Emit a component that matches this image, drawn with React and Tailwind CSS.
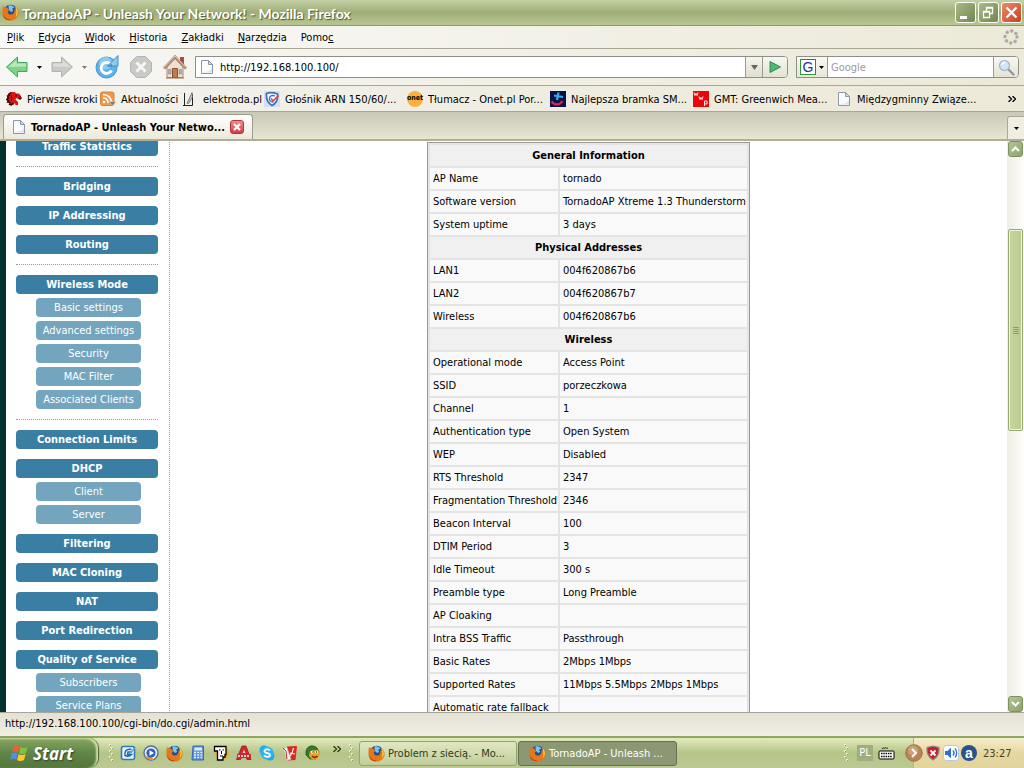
import React from "react";

const menuItems = [
  ["", "P", "lik"],
  ["", "E", "dycja"],
  ["", "W", "idok"],
  ["", "H", "istoria"],
  ["", "Z", "akładki"],
  ["", "N", "arzędzia"],
  ["Pomo", "c", ""],
];

const sideItems = [
  { label: "Traffic Statistics" },
  { divider: true },
  { label: "Bridging" },
  { label: "IP Addressing" },
  { label: "Routing" },
  { divider: true },
  { label: "Wireless Mode" },
  { label: "Basic settings", sub: true },
  { label: "Advanced settings", sub: true },
  { label: "Security", sub: true },
  { label: "MAC Filter", sub: true },
  { label: "Associated Clients", sub: true },
  { divider: true },
  { label: "Connection Limits" },
  { label: "DHCP" },
  { label: "Client", sub: true },
  { label: "Server", sub: true },
  { label: "Filtering" },
  { label: "MAC Cloning" },
  { label: "NAT" },
  { label: "Port Redirection" },
  { label: "Quality of Service" },
  { label: "Subscribers", sub: true },
  { label: "Service Plans", sub: true },
];

const sections = [
  {
    title: "General Information",
    rows: [
      ["AP Name", "tornado"],
      ["Software version", "TornadoAP Xtreme 1.3 Thunderstorm"],
      ["System uptime", "3 days"],
    ],
  },
  {
    title: "Physical Addresses",
    rows: [
      ["LAN1", "004f620867b6"],
      ["LAN2", "004f620867b7"],
      ["Wireless", "004f620867b6"],
    ],
  },
  {
    title: "Wireless",
    rows: [
      ["Operational mode", "Access Point"],
      ["SSID", "porzeczkowa"],
      ["Channel", "1"],
      ["Authentication type", "Open System"],
      ["WEP", "Disabled"],
      ["RTS Threshold", "2347"],
      ["Fragmentation Threshold", "2346"],
      ["Beacon Interval", "100"],
      ["DTIM Period", "3"],
      ["Idle Timeout", "300 s"],
      ["Preamble type", "Long Preamble"],
      ["AP Cloaking", ""],
      ["Intra BSS Traffic", "Passthrough"],
      ["Basic Rates", "2Mbps 1Mbps"],
      ["Supported Rates", "11Mbps 5.5Mbps 2Mbps 1Mbps"],
      ["Automatic rate fallback", ""],
    ],
  },
];

const Firefox = () => (
  <svg width="17" height="17" viewBox="0 0 16 16" className="shrink-0">
    <circle cx="8" cy="7.6" r="6.8" fill="#23508f" />
    <path d="M6 1.500c2-1 5 0 5.500 2l-2 1 1 2-2 1-2-2z" fill="#7cc4ea" />
    <path
      d="M.8 2.500C2 2.200 2.600 3 3.400 3.200 4.800 2.600 5.400 3.400 5.600 4.600L7 5.600 5.400 7.200C5.600 9.600 7.800 10.400 9.600 9.800 11.600 9 12 7 11.600 5 13 6.600 13.400 4 12.400 2.600 15 4.500 16 7 15.600 9.400 15 13.200 12 15.600 8 15.600 3.600 15.600.4 12 .4 8 .4 6 .6 4 .8 2.500z"
      fill="#e87817"
    />
    <path d="M12.400 2.600C15.600 5.600 15.600 10 12.800 12.600 14 9 13.800 6 12.400 2.600z" fill="#fbd24a" />
    <path d="M.8 9c.8 3.500 4 6 8 5.800-3.400 1.400-8-.8-8-5.800z" fill="#b8380c" />
  </svg>
);

const PageIcon = () => (
  <svg width="16" height="16" viewBox="0 0 16 16" className="shrink-0">
    <path d="M2.500 1.500h7l4 4v9h-11z" fill="#fbfcfe" stroke="#8c98a8" />
    <path d="M9.500 1.500v4h4z" fill="#d3dbe6" stroke="#8c98a8" strokeLinejoin="round" />
    <path d="M3.500 13.500H13V9c-2 3-5 4-9.500 4z" fill="#dde4ee" />
  </svg>
);

const Dinosaur = () => (
  <svg width="16" height="16" viewBox="0 0 16 16" className="shrink-0">
    <path
      d="M1 6l1-3 3-2h3.500l2 1.500H13l1.500 2 1 3-1.500 1.500L10.500 7l-1 1.500L12 11v3H9.500l-.5-2-1.500 2-3-1L1 10z"
      fill="#dc1717"
    />
    <path d="M5 1.500L3 3l.5 1.500L1.500 5l1 2-2 1.500 2 1-1 1.500 2.500.5-.5 2 2 .500L7 12" fill="none" stroke="#3a0505" strokeWidth="1.300" />
    <path d="M5 4l1 3-1 3M13 4.500l2 1.500v2l-3-1" fill="none" stroke="#5a0a0a" />
    <circle cx="10" cy="4.500" r=".9" fill="#200" />
  </svg>
);

const Feed = () => (
  <svg width="16" height="16" viewBox="0 0 16 16" className="shrink-0">
    <rect x=".5" y="1" width="13.500" height="13.500" rx="2" fill="#ef9648" stroke="#d98238" />
    <path d="M3 3.500c5 0 8.500 3.500 8.500 8.500M3 7c3 0 5 2 5 5" fill="none" stroke="#fff" strokeWidth="1.700" />
    <circle cx="4" cy="11" r="1.300" fill="#fff" />
    <path d="M9 10.500h7l-3.500 4z" fill="#7c7c7c" stroke="#ddd" strokeWidth=".5" />
  </svg>
);

const Elektroda = () => (
  <svg width="16" height="16" viewBox="0 0 16 16" className="shrink-0">
    <path d="M2.500 2v12M1 14.500h9.500M10.500 3v11.500" stroke="#222" fill="none" />
    <path d="M10 1.500L5 12.500l2-.5 3.500-6z" fill="#c9cccf" stroke="#666" strokeWidth=".8" />
  </svg>
);

const Shield = () => (
  <svg width="16" height="16" viewBox="0 0 16 16" className="shrink-0">
    <path d="M0 0h16v16H0z" fill="#d5e1f3" />
    <path d="M2.500 2.500c4-1.500 7-1 11 .5.500 5-1 9.500-5.500 11.500C3.500 12 2 8 2.500 2.500z" fill="#f5f9ff" stroke="#3d70c2" strokeWidth="1.800" />
    <path d="M7 7.500l2 2.500 5.500-5.500" fill="none" stroke="#db4b2d" strokeWidth="1.600" />
    <path d="M11 5c-2-1-5-.5-5.500 2S7 11.500 9.500 11" fill="none" stroke="#3d70c2" strokeWidth="1.300" />
  </svg>
);

const Onet = () => (
  <span className="flex size-4 shrink-0 items-center justify-center rounded-full bg-[#fbb040] text-[7px] font-bold leading-none">
    onet
  </span>
);

const Plus = () => (
  <svg width="16" height="16" viewBox="0 0 16 16" className="shrink-0">
    <path d="M0 0h16v16H0z" fill="#0c1048" />
    <path d="M8.500 1.500L7 9M4 4.500l9 1.500" stroke="#35b0e6" strokeWidth="2.200" />
    <path d="M1.500 10.500c3 4 8 4 11-.5" fill="none" stroke="#e2214e" strokeWidth="2.200" />
  </svg>
);

const Wwp = () => (
  <svg width="16" height="16" viewBox="0 0 16 16" className="shrink-0">
    <path d="M0 0h16v16H0z" fill="#e8080c" />
    <path d="M1 1.500l1 3 1-2 1 2 1-3M6 5.500l1 3 1-2 1 2 1-3M11.500 15v-5h2.500v3h-2.500" fill="none" stroke="#fff" strokeWidth=".9" />
  </svg>
);

const bookmarks = [
  { label: "Pierwsze kroki", icon: <Dinosaur />, width: "w-[94px]" },
  { label: "Aktualności", icon: <Feed />, width: "w-[82px]" },
  { label: "elektroda.pl", icon: <Elektroda />, width: "w-[82px]" },
  { label: "Głośnik ARN 150/60/...", icon: <Shield />, width: "w-[143px]" },
  { label: "Tłumacz - Onet.pl Por...", icon: <Onet />, width: "w-[143px]" },
  { label: "Najlepsza bramka SM...", icon: <Plus />, width: "w-[143px]" },
  { label: "GMT: Greenwich Mea...", icon: <Wwp />, width: "w-[143px]" },
  { label: "Międzygminny Związe...", icon: <PageIcon />, width: "w-[143px]" },
];

const Caret = ({ color = "#000" }) => (
  <svg width="5" height="3" viewBox="0 0 5 3" className="shrink-0">
    <path d="M0 0h5L2.500 3z" fill={color} />
  </svg>
);

const TitleBar = () => (
  <header className="flex h-[26px] shrink-0 items-center border-b border-[#8b9a67] bg-linear-to-b from-[#c3d0a6] via-[#9fae78] to-[#b9c893] pl-[2px] pr-[2px]">
    <Firefox />
    <h1 className="ml-[3px] grow whitespace-nowrap pt-[2px] font-['Lato',sans-serif] text-[14px] leading-5 font-bold text-white [text-shadow:1px_1px_1px_#4a5730]">
      TornadoAP - Unleash Your Network! - Mozilla Firefox
    </h1>
    <div className="flex gap-[2px]">
      <button type="button" aria-label="Minimalizuj" className="flex size-[21px] items-center justify-center rounded-[3px] border border-white bg-linear-to-br from-[#a9bb85] to-[#6f8752]">
        <svg width="19" height="19" viewBox="0 0 19 19"><path d="M4 13h7v3H4z" fill="#fff" /></svg>
      </button>
      <button type="button" aria-label="Przywróć" className="flex size-[21px] items-center justify-center rounded-[3px] border border-white bg-linear-to-br from-[#a9bb85] to-[#6f8752]">
        <svg width="19" height="19" viewBox="0 0 19 19">
          <path d="M4.500 8.500h6v6h-6zM4 9h7M7.500 8V4.500h6v6H11M7 5h7" fill="none" stroke="#fff" strokeWidth="1.300" />
        </svg>
      </button>
      <button type="button" aria-label="Zamknij" className="flex size-[21px] items-center justify-center rounded-[3px] border border-white bg-linear-to-br from-[#ec8a68] to-[#c93c1c]">
        <svg width="19" height="19" viewBox="0 0 19 19"><path d="M4.500 4.500l10 10M14.500 4.500l-10 10" stroke="#fff" strokeWidth="2.200" /></svg>
      </button>
    </div>
  </header>
);

const MenuBar = () => (
  <nav className="flex h-[23px] shrink-0 items-center justify-between border-b border-[#a9a793] bg-linear-to-r from-[#fafafa] to-[#ece9d8] pl-[7px] pr-[5px]">
    <div className="flex gap-[14px] pt-[2px]">
      {menuItems.map(([before, key, after]) => (
        <button type="button" key={before + key + after}>
          {before}
          <u>{key}</u>
          {after}
        </button>
      ))}
    </div>
    <svg width="16" height="16" viewBox="0 0 16 16">
      <circle cx="8" cy="8" r="6" fill="none" stroke="#aaa" strokeWidth="3.400" strokeLinecap="round" strokeDasharray=".1 4.612" />
    </svg>
  </nav>
);

const NavBar = () => (
  <div className="flex h-[37px] shrink-0 items-center border-b border-[#a9a793] bg-linear-to-r from-[#f7f7f5] to-[#ece9d8] pl-[5px] pr-[5px]">
    <button type="button" aria-label="Wstecz">
      <svg width="24" height="24" viewBox="0 0 24 24">
        <path d="M1.500 12L12.500 2v5.500H22v9h-9.500V22z" fill="#7ed389" stroke="#46a55d" strokeLinejoin="round" />
        <path d="M3.500 12l8-7v3.500H21v3z" fill="#b6eab8" />
      </svg>
    </button>
    <button type="button" aria-label="Historia wstecz" className="ml-2 mr-2"><Caret /></button>
    <button type="button" aria-label="Dalej">
      <svg width="24" height="24" viewBox="0 0 24 24">
        <path d="M22.500 12l-11-10v5.500H2v9h9.500V22z" fill="#c9c9c7" stroke="#b1b1af" strokeLinejoin="round" />
        <path d="M20.500 12l-8-7v3.500H3v3z" fill="#dcdcda" />
      </svg>
    </button>
    <button type="button" aria-label="Historia dalej" className="ml-2 mr-[7px]"><Caret color="#777" /></button>
    <button type="button" aria-label="Odśwież" className="mr-2">
      <svg width="26" height="26" viewBox="0 0 26 26">
        <circle cx="12.500" cy="13.500" r="10.500" fill="#5fb3e8" stroke="#4594cc" />
        <circle cx="11.500" cy="9" r="6.500" fill="#a8d9f6" opacity=".6" />
        <path d="M17.500 16.500a5.500 5.500 0 1 1-1-6.500" fill="none" stroke="#fff" strokeWidth="2.800" />
        <path d="M13.500 12h10.500V1.500z" fill="#8ecbf0" stroke="#3e8ec8" strokeLinejoin="round" />
        <path d="M13 12.500l5-3v3z" fill="#3e8ec8" />
      </svg>
    </button>
    <button type="button" aria-label="Zatrzymaj" className="mr-2">
      <svg width="26" height="26" viewBox="0 0 26 26">
        <path d="M8.500 2.500h9l6 6v9l-6 6h-9l-6-6v-9z" fill="#c9c9c7" stroke="#b5b5b3" />
        <path d="M8.500 8.500l9 9M17.500 8.500l-9 9" stroke="#f7f7f5" strokeWidth="3" />
      </svg>
    </button>
    <button type="button" aria-label="Strona startowa" className="mr-[7px]">
      <svg width="26" height="26" viewBox="0 0 26 26">
        <path d="M18 3h4v8h-4z" fill="#a8503c" />
        <path d="M5 13l8-9 8 9v10.500H5z" fill="#f0dfd0" stroke="#a68873" />
        <path d="M2 14.500L13 3l11 11.500" fill="none" stroke="#ad8a74" strokeWidth="3" />
        <path d="M2 13.500L13 2l11 11.500" fill="none" stroke="#dcc8b8" strokeWidth="1" />
        <path d="M10.500 14.500h5v9h-5z" fill="#c07a54" stroke="#8a5034" />
        <path d="M6.500 15.500H9V20H6.500zM17 15.500h2.500V20H17z" fill="#a9b4cd" stroke="#8e7868" strokeWidth=".5" />
        <path d="M4 24h18" stroke="#9a6a50" />
      </svg>
    </button>
    <div className="flex h-[22px] grow rounded-r-[4px] border border-[#8e8f86] bg-white">
      <label htmlFor="adres" className="flex items-center pl-[3px]" aria-label="Adres">
        <PageIcon />
      </label>
      <input id="adres" type="text" defaultValue="http://192.168.100.100/" className="w-0 grow px-[5px] pt-[2px] outline-none" />
      <button type="button" aria-label="Pokaż adresy" className="flex w-[17px] items-center justify-center border-l border-[#9b9b90] bg-linear-to-b from-[#f6f5ef] to-[#e0dece]">
        <svg width="7" height="5" viewBox="0 0 7 5"><path d="M0 0h7L3.500 5z" fill="#666" /></svg>
      </button>
      <button type="button" aria-label="Przejdź" className="flex w-[25px] items-center justify-center rounded-r-[3px] border-l border-[#9b9b90] bg-linear-to-b from-[#f8f7f2] to-[#e4e2d4]">
        <svg width="12" height="12" viewBox="0 0 12 12"><path d="M1 .500v11L11.500 6z" fill="#4fb673" stroke="#2f8a50" strokeLinejoin="round" /></svg>
      </button>
    </div>
    <div className="ml-2 flex h-[22px] w-[223px] overflow-hidden rounded-r-[4px] border border-[#8e8f86] bg-white">
      <button type="button" aria-label="Wyszukiwarka" className="flex w-[31px] items-center justify-between border-r border-[#9b9b90] bg-linear-to-b from-[#f8f7f2] to-[#e8e6da] pl-[3px] pr-[3px]">
        <span className="flex size-4 items-center justify-center border border-t-[#3a5fcf] border-r-[#d33] border-b-[#2a9a3a] border-l-[#2a9a3a] bg-white font-['Liberation_Sans',sans-serif] text-[14px] leading-[14px] text-[#1c2f9c]">
          G
        </span>
        <Caret />
      </button>
      <input type="text" aria-label="Szukaj" placeholder="Google" className="w-0 grow px-[3px] pt-[2px] outline-none placeholder:text-[#9a9a9a]" />
      <button type="button" aria-label="Szukaj w Google" className="flex w-[25px] items-center justify-center border-l border-[#9b9b90] bg-linear-to-b from-[#f8f7f2] to-[#e4e2d4]">
        <svg width="17" height="17" viewBox="0 0 17 17">
          <path d="M10 10l5.500 5.500" stroke="#8a8f96" strokeWidth="2" strokeLinecap="round" />
          <circle cx="6.500" cy="6.500" r="5" fill="#cfe6f7" stroke="#a3b3c4" strokeWidth="1.200" />
          <path d="M4 6a3 3 0 0 1 3-2.500" fill="none" stroke="#fff" strokeWidth="1.300" />
        </svg>
      </button>
    </div>
  </div>
);

const BookmarkBar = () => (
  <nav className="flex h-[26px] shrink-0 items-center border-b border-[#a9a793] bg-linear-to-r from-[#f3f2ed] to-[#ece9d8] pl-[6px] pr-2">
    {bookmarks.map(({ label, icon, width }) => (
      <a key={label} href="#" className={"flex shrink-0 items-center gap-[5px] whitespace-nowrap " + width}>
        {icon}
        <span className="pt-[2px]">{label}</span>
      </a>
    ))}
    <button type="button" aria-label="Więcej zakładek" className="ml-auto">
      <svg width="8" height="6" viewBox="0 0 8 6"><path d="M.5 0l3 3-3 3M4.500 0l3 3-3 3" fill="none" stroke="#000" strokeWidth="1.300" /></svg>
    </button>
  </nav>
);

const TabBar = () => (
  <div className="flex h-[29px] shrink-0 items-end justify-between border-b-2 border-[#b0ad98] bg-linear-to-b from-[#c9c7b6] to-[#e8e5d3] pl-[3px]">
    <div className="flex h-[25px] w-[250px] items-center rounded-t-[4px] border border-b-0 border-[#9c9a88] bg-linear-to-b from-white to-[#ece9d8] pl-[7px] pr-2">
      <PageIcon />
      <span className="ml-1 grow whitespace-nowrap pt-[2px] font-bold">TornadoAP - Unleash Your Netwo...</span>
      <button type="button" aria-label="Zamknij kartę" className="flex size-[14px] items-center justify-center rounded-[3px] border border-[#b5343c] bg-linear-to-b from-[#f08a8a] to-[#d23c46]">
        <svg width="8" height="8" viewBox="0 0 8 8"><path d="M1 1l6 6M7 1L1 7" stroke="#fff" strokeWidth="2.200" /></svg>
      </button>
    </div>
    <button type="button" aria-label="Lista kart" className="flex h-[23px] w-[17px] items-center justify-center rounded-tl-[3px] border-l border-t border-[#aaa897] bg-[#f0eee2]">
      <Caret />
    </button>
  </div>
);

const Sidebar = () => (
  <nav className="flex w-[164px] shrink-0 flex-col border-r border-dotted border-[#999] pl-[10px] pr-[11px] text-center text-white">
    {sideItems.map(({ label, sub, divider }, i) =>
      divider ? (
        <hr key={i} className="mt-[10px] border-t border-dotted border-[#999]" />
      ) : (
        <a
          key={i}
          href="#"
          className={
            "block h-[19px] shrink-0 rounded-[4px] leading-[19px] " +
            (sub
              ? "mt-1 ml-5 mr-[17px] whitespace-nowrap bg-[#74a5be]"
              : "mt-[10px] bg-[#3a7fa3] font-bold first:mt-0")
          }
        >
          {label}
        </a>
      )
    )}
  </nav>
);

const InfoTable = () => (
  <table className="mx-auto mt-[5px] w-[323px] table-fixed border-separate border-spacing-[2px] self-start border border-[#999] bg-[#e4e4e4]">
    <colgroup>
      <col className="w-32" />
      <col />
    </colgroup>
    {sections.map(({ title, rows }) => (
      <tbody key={title}>
        <tr className="h-[21px]">
          <th colSpan={2} className="bg-[#f0f0f0] p-0 pt-px font-bold">{title}</th>
        </tr>
        {rows.map(([name, value]) => (
          <tr key={name} className="h-[21px]">
            <td className="whitespace-nowrap bg-[#f9f9f9] p-0 pt-px pl-[3px]">{name}</td>
            <td className="whitespace-nowrap bg-[#f9f9f9] p-0 pt-px pl-[3px]">{value}</td>
          </tr>
        ))}
      </tbody>
    ))}
  </table>
);

const ScrollBar = () => (
  <div className="flex w-[17px] shrink-0 flex-col bg-linear-to-r from-[#eeede5] to-[#fefefb] pl-px pr-px">
    <button type="button" aria-label="W górę" className="flex h-4 shrink-0 items-center justify-center rounded-[3px] border border-[#7d9160] bg-linear-to-br from-[#b4c596] to-[#8ca36c]">
      <svg width="9" height="6" viewBox="0 0 9 6"><path d="M1 5l3.500-3.500L8 5" fill="none" stroke="#fff" strokeWidth="2" /></svg>
    </button>
    <div className="flex grow flex-col">
      <div className="grow-72 basis-0" />
      <div className="flex grow-200 basis-0 flex-col items-center justify-center gap-px rounded-[2px] border border-[#98a873] bg-linear-to-r from-[#c5d6a0] to-[#bccb90] shadow-[inset_0_0_0_1px_#eef4dd]">
        <div className="h-px w-[6px] bg-[#8a9d66]" />
        <div className="h-px w-[6px] bg-[#8a9d66]" />
        <div className="h-px w-[6px] bg-[#8a9d66]" />
        <div className="h-px w-[6px] bg-[#8a9d66]" />
      </div>
      <div className="grow-265 basis-0" />
    </div>
    <button type="button" aria-label="W dół" className="flex h-4 shrink-0 items-center justify-center rounded-[3px] border border-[#7d9160] bg-linear-to-br from-[#b4c596] to-[#8ca36c]">
      <svg width="9" height="6" viewBox="0 0 9 6"><path d="M1 1l3.500 3.500L8 1" fill="none" stroke="#fff" strokeWidth="2" /></svg>
    </button>
  </div>
);

const Grip = () => (
  <svg width="6" height="20" viewBox="0 0 6 20" className="shrink-0">
    <path d="M1 1h2v2H1zM3 4h2v2H3zM1 7h2v2H1zM3 10h2v2H3zM1 13h2v2H1zM3 16h2v2H3z" fill="#eaf1cf" />
    <path d="M2 2h1v1H2zM4 5h1v1H4zM2 8h1v1H2zM4 11h1v1H4zM2 14h1v1H2zM4 17h1v1H4z" fill="#8b9c66" />
  </svg>
);

const WindowsFlag = () => (
  <svg width="19" height="18" viewBox="0 0 19 18" className="shrink-0">
    <path d="M3.500 2.500c2-1.500 4-1.500 6 0L8 8.500c-2-1.300-4-1.300-6 0z" fill="#ee6030" />
    <path d="M10.500 3c2 1.300 4.500 1.300 7 0L16 9c-2.500 1.300-4.500 1.300-7 0z" fill="#7fc241" />
    <path d="M1.700 9.500c2-1.500 4-1.500 6 0L6 15.500c-2-1.300-4-1.300-6 0z" fill="#4d8fe0" />
    <path d="M8.700 10c2 1.300 4.500 1.300 7 0L14 16c-2.500 1.300-4.500 1.300-7 0z" fill="#fbc92f" />
  </svg>
);

const quickIcons = [
  <svg width="16" height="16" viewBox="0 0 16 16">
    <rect x="1.500" y="1.500" width="13" height="13" rx="2" fill="#e9f3fb" stroke="#2d7db8" strokeWidth="1.600" />
    <path d="M11.500 4.500c-5-1-7.500 2-6.500 6 3 1.500 5 .500 6.500-1H7.500l.5-2.500h4" fill="none" stroke="#1d6aa8" strokeWidth="1.500" />
    <path d="M9 9l6-6" stroke="#5ba0d0" strokeWidth="1.500" />
  </svg>,
  <svg width="16" height="16" viewBox="0 0 16 16">
    <circle cx="8" cy="8" r="7" fill="#e8eef6" stroke="#5a6d9c" strokeWidth="1.400" />
    <path d="M2 11a7 7 0 0 0 9 3.500L8 12z" fill="#e8932e" />
    <circle cx="8" cy="8" r="4.600" fill="#2f62b8" />
    <path d="M6.500 5.300v5.400L11 8z" fill="#fff" />
  </svg>,
  <Firefox />,
  <svg width="16" height="16" viewBox="0 0 16 16">
    <path d="M3 1h10.500v14H2z" fill="#5f8fd6" stroke="#3c66ad" />
    <path d="M4.500 2.500h7.500v3H4.300z" fill="#d7ebf7" />
    <path d="M4 7.500h8.500M4 10h8.500M4 12.500h8.500" stroke="#e4eefb" strokeWidth="1.500" strokeDasharray="2 1.200" />
  </svg>,
  <svg width="16" height="16" viewBox="0 0 16 16">
    <circle cx="9" cy="8" r="6.800" fill="#f6a51c" />
    <path d="M1.500 1.500h11.500v8h-1v2.500h-2v3H4.500v-9h-3z" fill="#fff" stroke="#000" strokeWidth="1.300" />
    <path d="M9.500 5H11M6 5h1.500M8.500 6v3M7 11h3" stroke="#000" strokeWidth="1" />
  </svg>,
  <svg width="16" height="16" viewBox="0 0 16 16">
    <path d="M6 1h4l5 13.500h-4l-1-3H6l-1.500 3H.5z" fill="#d3232c" stroke="#951319" strokeWidth=".7" />
    <path d="M8 4.500l-1.500 3.500h3z" fill="#f0d0ca" />
    <path d="M1 9h14v4H1z" fill="#c92a30" />
    <path d="M2 11h12" stroke="#f2c4bc" strokeWidth="1.800" strokeDasharray="2 1" />
  </svg>,
  <svg width="16" height="16" viewBox="0 0 16 16">
    <circle cx="5" cy="5" r="4.500" fill="#1fa9e8" />
    <circle cx="11" cy="11" r="4.500" fill="#1fa9e8" />
    <circle cx="8" cy="8" r="6.500" fill="#2bb3f0" />
    <path d="M11 5.500C9.500 3.500 5.500 4 5.500 6.200c0 2.300 5.500 1.300 5.500 3.700C11 12.300 6.500 12.500 5 10.300" fill="none" stroke="#fff" strokeWidth="1.800" />
  </svg>,
  <svg width="16" height="16" viewBox="0 0 16 16">
    <path d="M5 1.500L15 1l-1.500 14-7.500.5z" fill="#dc2620" />
    <path d="M1 3l4-.5 4 12-4 .5z" fill="#f2f2f2" stroke="#bbb" strokeWidth=".6" />
    <path d="M1 3l3 3 1 8" fill="none" stroke="#c8332c" strokeWidth="1" />
    <path d="M8 11c2-2 3-5 3.500-8M8 8l5 1" fill="none" stroke="#fff" strokeWidth="1.200" />
  </svg>,
  <svg width="16" height="16" viewBox="0 0 16 16">
    <path d="M1 6C2 1 8-1 12 3l2 4-3 7H5L1 10z" fill="#357a2a" stroke="#1f4a18" strokeWidth=".7" />
    <path d="M5 6l8-1 2 4-3 5.500H7L4 11z" fill="#e5a222" />
    <circle cx="7.500" cy="7" r="1.500" fill="#fff" />
    <circle cx="11.500" cy="7" r="1.500" fill="#fff" />
    <circle cx="8" cy="7" r=".7" />
    <circle cx="11.500" cy="7" r=".7" />
    <path d="M7 11c2 2 4 1.500 5.500 0" fill="none" stroke="#8c2a10" strokeWidth="1.500" />
  </svg>,
];

const TaskBar = () => (
  <footer className="flex h-8 shrink-0 items-stretch border-t-2 border-[#8fa563] bg-linear-to-b from-[#e3ebbd] via-[#b5c487] to-[#bcc995]">
    <button type="button" className="flex w-[98px] shrink-0 items-center gap-1 rounded-r-[10px] bg-linear-to-b from-[#88a860] via-[#5f8548] to-[#55763c] pl-[10px] shadow-[inset_-2px_1px_2px_#cfe0a8,1px_0_1px_#4a6234]">
      <WindowsFlag />
      <span className="font-['Open_Sans',sans-serif] text-[17px] font-bold italic leading-none text-white [text-shadow:1px_1px_2px_#2d4220]">
        Start
      </span>
    </button>
    <div className="ml-[10px] flex items-center">
      <Grip />
      <div className="ml-[6px] flex gap-[7px]">
        {quickIcons.map((icon, i) => (
          <button type="button" key={i} aria-label={"Skrót " + (i + 1)}>{icon}</button>
        ))}
      </div>
      <button type="button" aria-label="Więcej skrótów" className="mb-2 ml-3">
        <svg width="8" height="6" viewBox="0 0 8 6"><path d="M.5 0l3 3-3 3M4.500 0l3 3-3 3" fill="none" stroke="#2c3a14" strokeWidth="1.300" /></svg>
      </button>
      <div className="ml-[7px]"><Grip /></div>
    </div>
    <div className="ml-[5px] flex grow items-center gap-px whitespace-nowrap">
      <button type="button" className="flex h-[25px] w-[158px] items-center gap-[3px] rounded-[3px] border border-[#93a56c] bg-linear-to-b from-[#e0e8c2] to-[#c0cd99] pl-2 text-[#2f3a1a]">
        <Firefox />
        <span className="pt-[2px]">Problem z siecią. - Mo...</span>
      </button>
      <button type="button" className="flex h-[25px] w-[159px] items-center gap-[3px] rounded-[3px] border border-[#66744c] bg-[#8b9873] pl-[10px] text-white">
        <Firefox />
        <span className="pt-[2px]">TornadoAP - Unleash ...</span>
      </button>
    </div>
    <div className="flex items-center">
      <Grip />
      <span className="ml-2 flex size-4 items-center justify-center bg-[#a0ae7d] text-white">PL</span>
      <svg width="17" height="16" viewBox="0 0 17 16" className="ml-[5px] mr-[18px]">
        <path d="M4 4c1-2 2 0 3-1s2 1 3 0" fill="none" stroke="#222" />
        <rect x="1" y="6" width="15" height="8" rx="1" fill="#fff" stroke="#000" />
        <path d="M3 8.500h11M3 11.500h11" stroke="#000" strokeWidth="1.500" strokeDasharray="1.500 .8" />
      </svg>
    </div>
    <div className="flex w-[111px] items-center border-l border-[#c3ad6c] bg-linear-to-b from-[#f7efcb] via-[#e6d6a0] to-[#e3d49e]">
      <button type="button" aria-label="Ukryj ikony" className="-ml-[9px]">
        <svg width="18" height="18" viewBox="0 0 18 18">
          <circle cx="9" cy="9" r="8.300" fill="#b98558" stroke="#8f6440" strokeWidth=".8" />
          <circle cx="8" cy="6.500" r="5" fill="#dbb48c" opacity=".6" />
          <path d="M7 5l4 4-4 4" fill="none" stroke="#fff" strokeWidth="2" />
        </svg>
      </button>
      <div className="ml-[2px] flex gap-[2px]">
        <svg width="16" height="16" viewBox="0 0 16 16">
          <path d="M8 1l6 1.500c.500 6-1.500 10-6 12.500C3.500 12.500 1.500 8.500 2 2.500z" fill="#c6212b" stroke="#8b8b90" strokeWidth="1.200" />
          <path d="M5.500 5.500l5 5M10.500 5.500l-5 5" stroke="#fff" strokeWidth="1.800" />
        </svg>
        <svg width="16" height="16" viewBox="0 0 16 16">
          <rect x=".5" y=".5" width="15" height="15" rx="3" fill="#fff" stroke="#b7c8e6" />
          <path d="M2 6h2.500L8 2.500v11L4.500 10H2z" fill="#2d71cf" />
          <path d="M10 5.500c1.300 1.500 1.300 3.500 0 5M12 3.500c2.200 2.500 2.200 6.500 0 9" fill="none" stroke="#2d71cf" strokeWidth="1.300" />
        </svg>
        <span className="flex size-4 items-center justify-center rounded-full bg-[#2a5488] font-['Liberation_Sans',sans-serif] text-[14px] font-bold leading-[14px] text-white">a</span>
      </div>
      <time className="ml-[6px] pt-[2px] text-[#4a431f]">23:27</time>
    </div>
  </footer>
);

const App = () => {
  return (
    <div className="flex h-screen flex-col overflow-hidden bg-[#ece9d8] font-['DejaVu_Sans_Condensed','DejaVu_Sans',sans-serif] text-[11px] leading-[14px] text-black">
      <TitleBar />
      <MenuBar />
      <NavBar />
      <BookmarkBar />
      <TabBar />
      <div className="flex min-h-0 grow bg-white">
        <div className="w-[6px] shrink-0 bg-[#02302f]" />
        <div className="min-w-0 grow overflow-hidden">
          <main className="-mt-1 flex">
            <Sidebar />
            <InfoTable />
          </main>
        </div>
        <ScrollBar />
      </div>
      <div className="flex h-6 shrink-0 items-center border-t border-[#a9a793] bg-linear-to-b from-[#e3e1d3] to-[#f2f0e6] pb-[2px] pl-[5px]">
        http://192.168.100.100/cgi-bin/do.cgi/admin.html
      </div>
      <TaskBar />
    </div>
  );
};

export default App;
